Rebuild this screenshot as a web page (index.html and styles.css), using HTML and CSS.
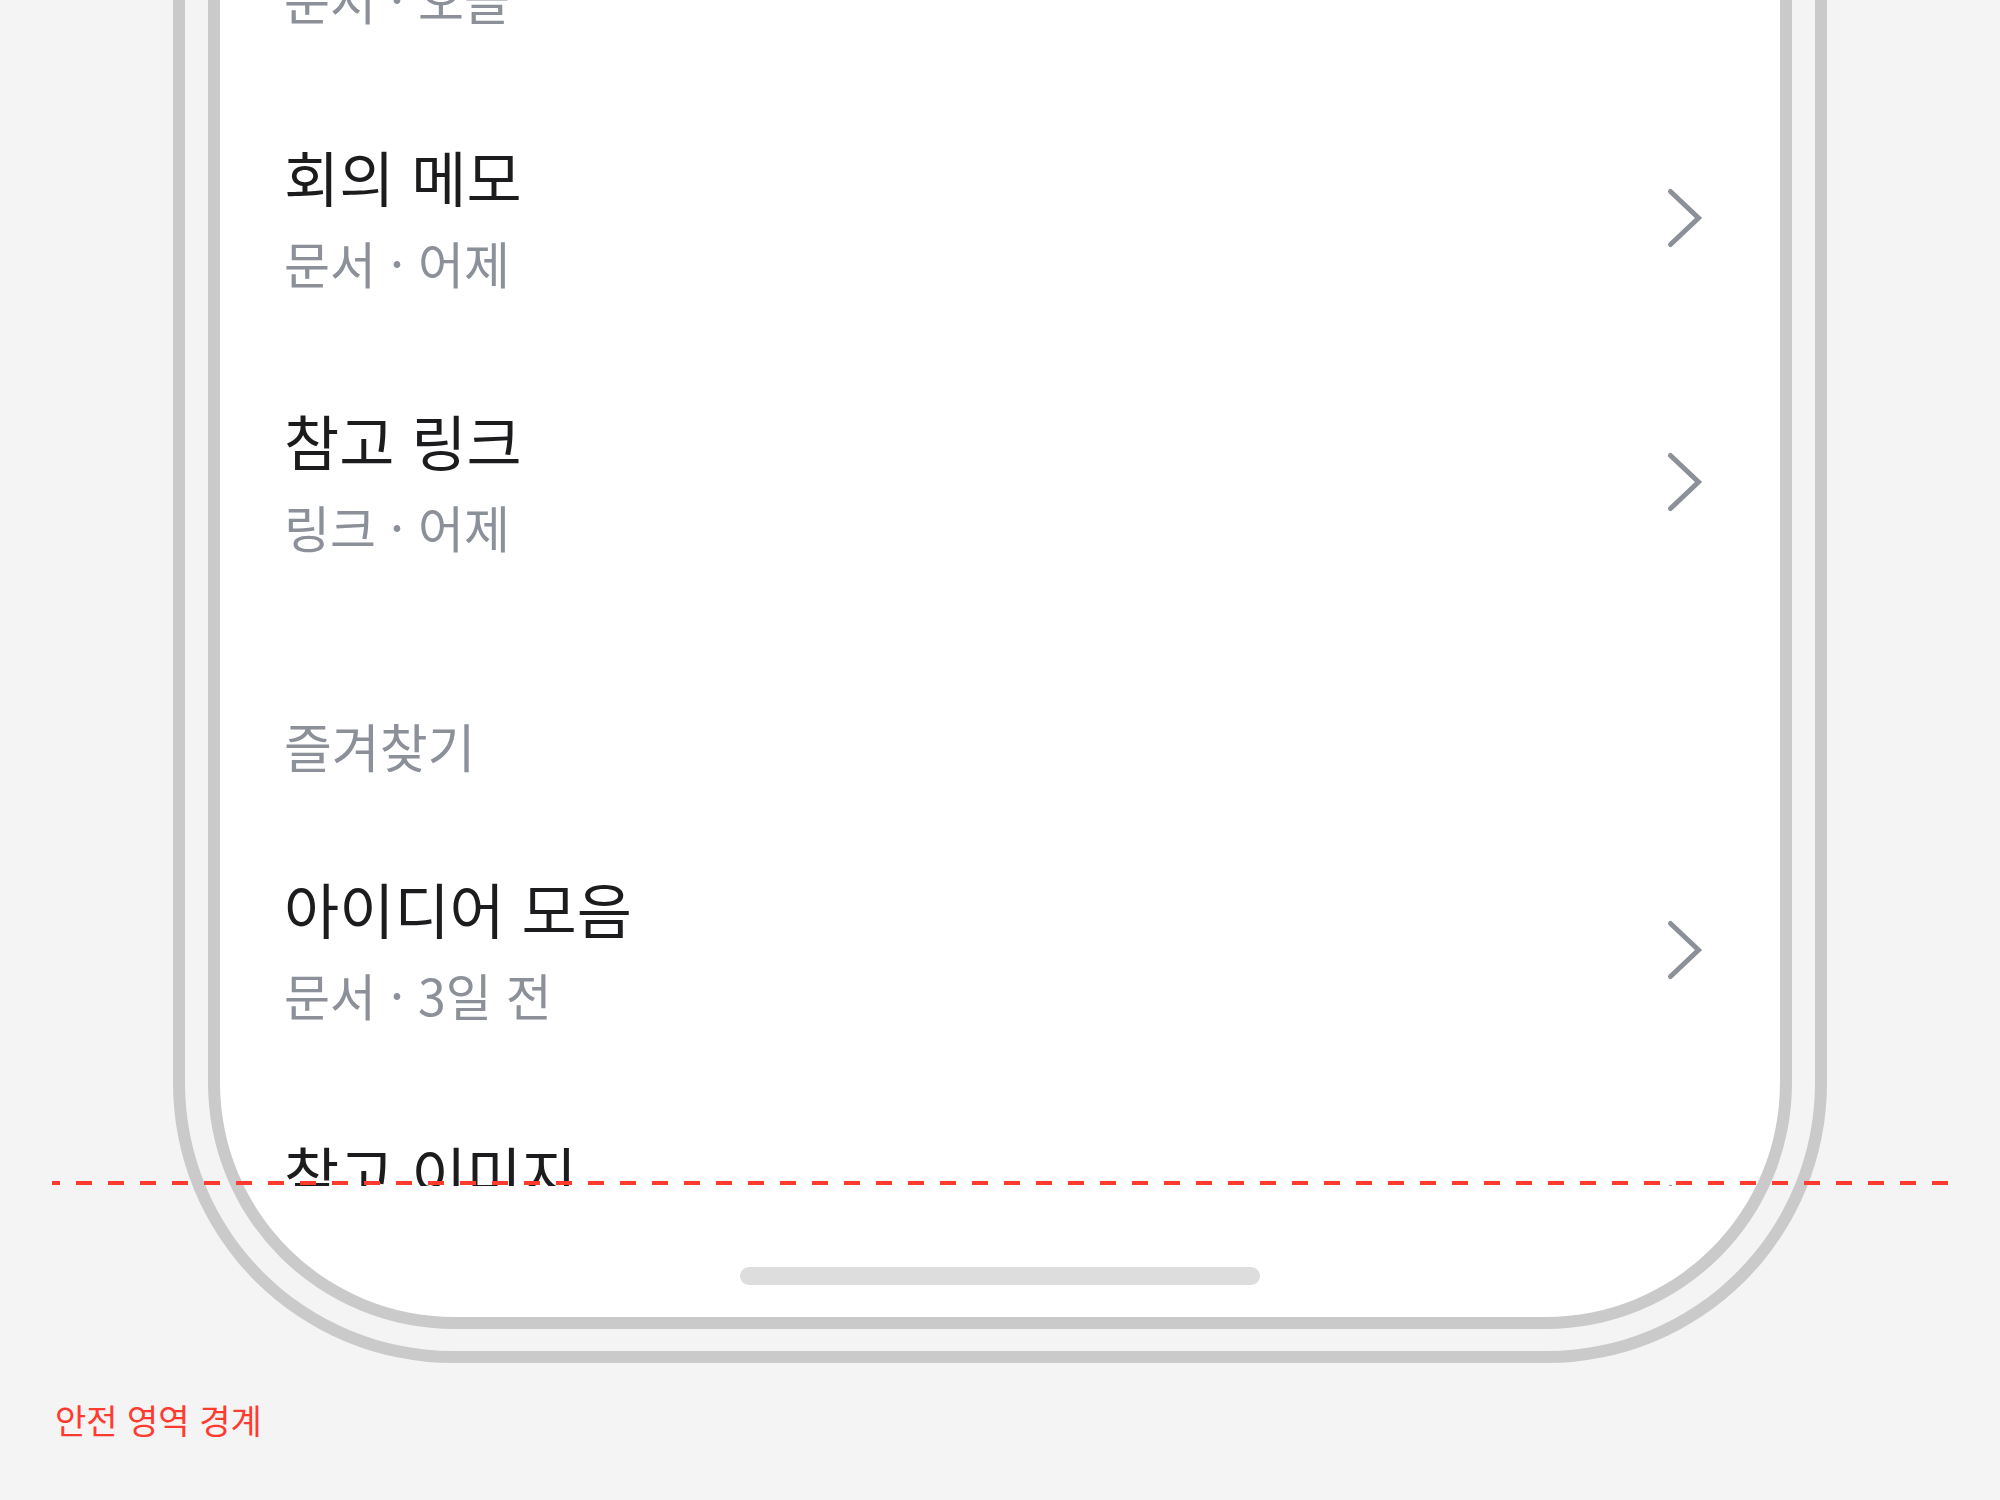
FILE: index.html
```html
<!DOCTYPE html>
<html lang="ko">
<head>
<meta charset="utf-8">
<title>목록</title>
<link rel="stylesheet" href="styles.css">
</head>
<body>
<div class="device">
  <div class="screen">
    <div class="list">
      <div class="item">
        <div class="text">
          <div class="title">프로젝트 계획</div>
          <div class="meta">문서 · 오늘</div>
        </div>
        <svg class="chev" viewBox="0 0 40 64" width="40" height="64"><path d="M6.5 5.5 L34.5 32 L6.5 58.5"/></svg>
      </div>
      <div class="item">
        <div class="text">
          <div class="title">회의 메모</div>
          <div class="meta">문서 · 어제</div>
        </div>
        <svg class="chev" viewBox="0 0 40 64" width="40" height="64"><path d="M6.5 5.5 L34.5 32 L6.5 58.5"/></svg>
      </div>
      <div class="item">
        <div class="text">
          <div class="title">참고 링크</div>
          <div class="meta">링크 · 어제</div>
        </div>
        <svg class="chev" viewBox="0 0 40 64" width="40" height="64"><path d="M6.5 5.5 L34.5 32 L6.5 58.5"/></svg>
      </div>
      <div class="section">즐겨찾기</div>
      <div class="item">
        <div class="text">
          <div class="title">아이디어 모음</div>
          <div class="meta">문서 · 3일 전</div>
        </div>
        <svg class="chev" viewBox="0 0 40 64" width="40" height="64"><path d="M6.5 5.5 L34.5 32 L6.5 58.5"/></svg>
      </div>
      <div class="item">
        <div class="text">
          <div class="title">참고 이미지</div>
          <div class="meta">이미지 · 1주 전</div>
        </div>
        <svg class="chev" viewBox="0 0 40 64" width="40" height="64"><path d="M6.5 5.5 L34.5 32 L6.5 58.5"/></svg>
      </div>
    </div>
    <div class="home-indicator"></div>
  </div>
</div>
<div class="safe-line"></div>
<div class="caption">안전 영역 경계</div>
</body>
</html>
```
FILE: styles.css
```css
html, body {
  margin: 0;
  padding: 0;
}
body {
  width: 2000px;
  height: 1500px;
  overflow: hidden;
  background: #f4f4f4;
  position: relative;
  font-family: "Noto Sans CJK KR", "Noto Sans", sans-serif;
}
.device {
  box-sizing: border-box;
  width: 1654px;
  height: 1763px;
  margin: -400px 0 0 173px;
  border: 12px solid #cacaca;
  border-top: none;
  border-radius: 0 0 280px 280px;
  padding: 0 23px 22px;
}
.screen {
  box-sizing: border-box;
  height: 100%;
  background: #ffffff;
  border: 12px solid #cacaca;
  border-top: none;
  border-radius: 0 0 246px 246px;
  overflow: hidden;
  display: flex;
  flex-direction: column;
}
.list {
  box-sizing: border-box;
  flex: none;
  height: 1586px;
  padding-top: 222px;
  overflow: hidden;
}
.item {
  box-sizing: border-box;
  height: 264px;
  display: flex;
  align-items: center;
  justify-content: space-between;
  padding: 0 76px 0 64px;
}
.text {
  display: flex;
  flex-direction: column;
  padding-bottom: 4px;
}
.title {
  font-size: 60px;
  line-height: 72px;
  color: #1c1c1e;
}
.meta {
  font-size: 50px;
  line-height: 60px;
  margin-top: 20px;
  color: #8b9099;
}
.chev {
  flex: none;
  fill: none;
  stroke: #8b9099;
  stroke-width: 5;
  stroke-linecap: round;
  stroke-linejoin: miter;
}
.section {
  box-sizing: border-box;
  height: 204px;
  padding: 101px 64px 0;
  font-size: 52px;
  line-height: 62px;
  color: #8b9099;
}
.home-indicator {
  flex: none;
  width: 520px;
  height: 18px;
  margin: 81px auto 0;
  border-radius: 9px;
  background: #dddddd;
}
.safe-line {
  position: absolute;
  left: 52px;
  top: 1181px;
  width: 1896px;
  height: 4px;
  background: repeating-linear-gradient(to right, #ff3b30 0 16px, transparent 16px 32px);
  background-position: -8px 0;
}
.caption {
  margin: 34px 0 0 55px;
  font-size: 34px;
  line-height: 46px;
  color: #ff3b30;
}
```
